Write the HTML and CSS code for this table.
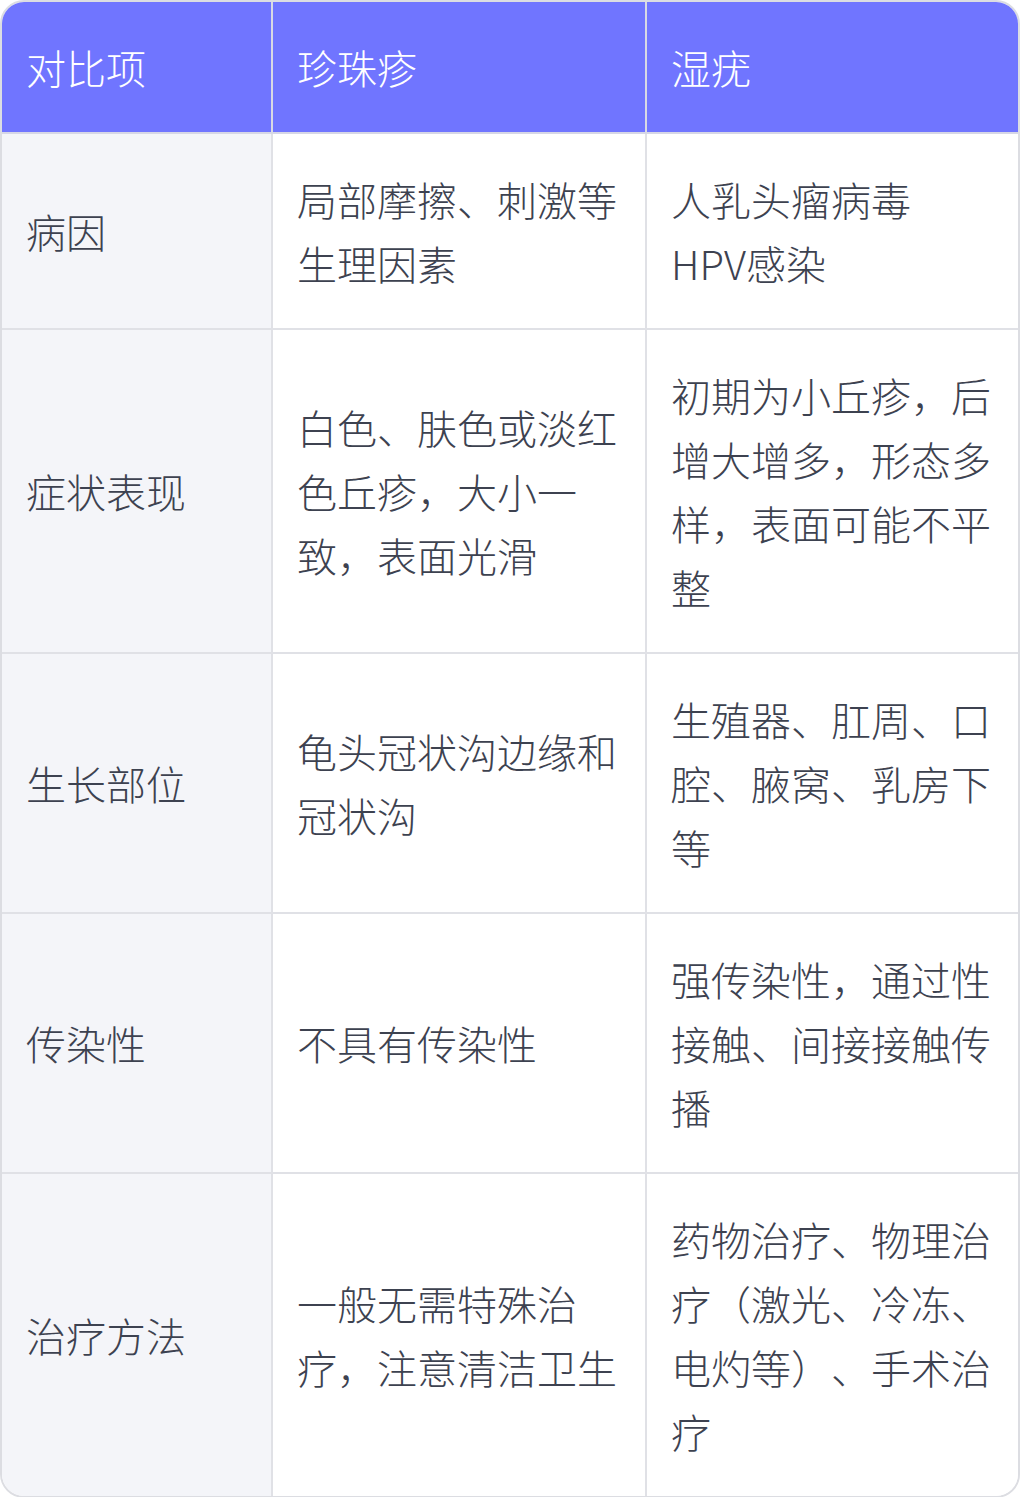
FILE: index.html
```html
<!DOCTYPE html>
<html lang="zh-CN">
<head>
<meta charset="utf-8">
<link rel="stylesheet" href="styles.css">
</head>
<body>
<div class="wrap">
<table class="cmp">
<colgroup><col class="c1"><col class="c2"><col class="c3"></colgroup>
<thead>
<tr><th>对比项</th><th>珍珠疹</th><th class="last">湿疣</th></tr>
</thead>
<tbody>
<tr><td class="key">病因</td><td>局部摩擦、刺激等生理因素</td><td class="last">人乳头瘤病毒<span class="term">HPV感染</span></td></tr>
<tr><td class="key">症状表现</td><td>白色、肤色或淡红色丘疹，大小一致，表面光滑</td><td class="last">初期为小丘疹，后增大增多，形态多样，表面可能不平整</td></tr>
<tr><td class="key">生长部位</td><td>龟头冠状沟边缘和冠状沟</td><td class="last">生殖器、肛周、口腔、腋窝、乳房下等</td></tr>
<tr><td class="key">传染性</td><td>不具有传染性</td><td class="last">强传染性，通过性接触、间接接触传播</td></tr>
<tr class="end"><td class="key">治疗方法</td><td>一般无需特殊治疗，注意清洁卫生</td><td class="last">药物治疗、物理治疗（激光、冷冻、电灼等）、手术治疗</td></tr>
</tbody>
</table>
</div>
</body>
</html>
```
FILE: styles.css
```css
html, body {
  margin: 0;
  padding: 0;
  background: #ffffff;
}
.wrap {
  width: 1020px;
  box-sizing: border-box;
  border: 2px solid #dcdde2;
  border-radius: 24px;
  overflow: hidden;
}
.cmp {
  width: 1016px;
  table-layout: fixed;
  border-collapse: separate;
  border-spacing: 0;
  font-family: "Noto Sans CJK SC", "Noto Sans", sans-serif;
  font-weight: 300;
  font-size: 40px;
  line-height: 64px;
  text-spacing-trim: space-all;
}
.c1 { width: 271px; }
.c2 { width: 374px; }
.c3 { width: 371px; }
.cmp th, .cmp td {
  box-sizing: border-box;
  padding: 33px 24px 33px 24px;
  text-align: left;
  vertical-align: middle;
  border-right: 2px solid #e0e1e6;
  border-bottom: 2px solid #e0e1e6;
  line-break: strict;
}
.cmp th {
  background: #7075ff;
  color: #ffffff;
  font-weight: 300;
  border-bottom-color: #d6d7e6;
  border-right-color: #d8d9e4;
}
.cmp td {
  color: #3d4250;
  background: #ffffff;
}
.cmp td.key {
  background: #f4f5f9;
}
.cmp .last {
  border-right: none;
}
.cmp tr.end td {
  border-bottom: none;
}
.term {
  white-space: nowrap;
}
```
